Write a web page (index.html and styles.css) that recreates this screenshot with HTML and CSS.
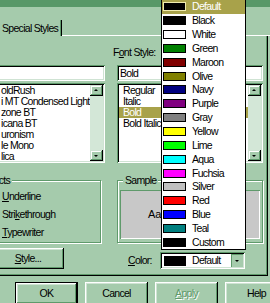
FILE: index.html
```html
<!DOCTYPE html>
<html lang="en">
<head>
    <meta charset="UTF-8">
    <title>Font</title>
    <link rel="stylesheet" href="styles.css">
</head>
<body>
    <div class="top-band"></div>

    <div class="tabs">
        <div class="tab">Special Styles</div>
        <div class="tab-rest"></div>
    </div>

    <div class="panel">
        <div class="fields">
            <div class="col col-left">
                <div class="label">&nbsp;</div>
                <div class="textbox"></div>
                <div class="listbox">
                    <ul class="items">
                        <li>oldRush</li>
                        <li>i MT Condensed Light</li>
                        <li>zone BT</li>
                        <li>icana BT</li>
                        <li>uronism</li>
                        <li>le Mono</li>
                        <li>lica</li>
                    </ul>
                    <div class="scrollbar">
                        <div class="arrow up"></div>
                        <div class="track"></div>
                        <div class="arrow down"></div>
                    </div>
                </div>
            </div>
            <div class="col col-right">
                <div class="label label-style">F<u>o</u>nt Style:</div>
                <div class="textbox">Bold</div>
                <div class="listbox">
                    <ul class="items">
                        <li>Regular</li>
                        <li>Italic</li>
                        <li class="selected">Bold</li>
                        <li>Bold Italic</li>
                    </ul>
                    <div class="scrollbar">
                        <div class="arrow up"></div>
                        <div class="track"></div>
                        <div class="arrow down"></div>
                    </div>
                </div>
            </div>
        </div>

        <div class="groups">
            <div class="group group-effects">
                <div class="group-title">Effects</div>
                <div class="check"><u>U</u>nderline</div>
                <div class="check">Stri<u>k</u>ethrough</div>
                <div class="check"><u>T</u>ypewriter</div>
            </div>
            <div class="group group-sample">
                <div class="group-title">Sample</div>
                <div class="sample">AaBbYyZz</div>
            </div>
        </div>

        <div class="lower">
            <div class="lower-left">
                <button class="btn btn-style"><u>S</u>tyle...</button>
            </div>
            <div class="lower-right">
                <span class="color-label"><u>C</u>olor:</span>
                <div class="combo">
                    <span class="swatch" style="background:#000"></span>
                    <span class="combo-text">Default</span>
                    <span class="combo-btn"></span>
                </div>
            </div>
        </div>
    </div>

    <div class="buttons">
        <button class="btn btn-default">OK</button>
        <button class="btn">Cancel</button>
        <button class="btn btn-disabled"><u>A</u>pply</button>
        <button class="btn">Help</button>
    </div>

    <ul class="popup">
        <li class="selected"><span class="swatch" style="background:#000"></span>Default</li>
        <li><span class="swatch" style="background:#000"></span>Black</li>
        <li><span class="swatch" style="background:#fff"></span>White</li>
        <li><span class="swatch" style="background:#008000"></span>Green</li>
        <li><span class="swatch" style="background:#800000"></span>Maroon</li>
        <li><span class="swatch" style="background:#808000"></span>Olive</li>
        <li><span class="swatch" style="background:#000080"></span>Navy</li>
        <li><span class="swatch" style="background:#800080"></span>Purple</li>
        <li><span class="swatch" style="background:#808080"></span>Gray</li>
        <li><span class="swatch" style="background:#ffff00"></span>Yellow</li>
        <li><span class="swatch" style="background:#00ff00"></span>Lime</li>
        <li><span class="swatch" style="background:#00ffff"></span>Aqua</li>
        <li><span class="swatch" style="background:#ff00ff"></span>Fuchsia</li>
        <li><span class="swatch" style="background:#c0c0c0"></span>Silver</li>
        <li><span class="swatch" style="background:#ff0000"></span>Red</li>
        <li><span class="swatch" style="background:#0000ff"></span>Blue</li>
        <li><span class="swatch" style="background:#008080"></span>Teal</li>
        <li><span class="swatch" style="background:#000"></span>Custom</li>
    </ul>
</body>
</html>
```

FILE: styles.css
```css
body, html {
    margin: 0;
    padding: 0;
}

body {
    position: relative;
    width: 270px;
    height: 303px;
    overflow: hidden;
    background-color: #a5cbac;
    font-family: 'Liberation Sans', Arial, sans-serif;
    font-size: 10.5px;
    letter-spacing: -0.7px;
    line-height: 13px;
    color: #000;
}

ul {
    margin: 0;
    padding: 0;
    list-style: none;
}

.top-band {
    height: 7px;
    background-color: #589868;
}

/* tabs */
.tabs {
    display: flex;
    margin-top: 13px;
    height: 16px;
}

.tab {
    width: 62px;
    padding-top: 2px;
    padding-left: 2px;
    box-sizing: border-box;
    border-right: 1px solid #000;
    box-shadow: inset -1px 0 0 #5f9a6b;
    white-space: nowrap;
    overflow: hidden;
}

.tab-rest {
    flex: 1;
    border-bottom: 1px solid #fff;
}

/* panel */
.panel {
    height: 240px;
    box-sizing: border-box;
    padding-top: 10px;
    margin-right: 2px;
    border-right: 1px solid #000;
    border-bottom: 1px solid #000;
    box-shadow: inset -1px -1px 0 #5f9a6b;
}

.fields {
    display: flex;
    gap: 12px;
    margin-left: -6px;
}

.col-left {
    width: 111px;
}

.col-right {
    width: 146px;
}

.label {
    height: 13px;
    white-space: nowrap;
}

.label-style {
    margin-left: -4px;
}

.textbox {
    margin-top: 6px;
    height: 16px;
    box-sizing: border-box;
    padding: 2px 3px;
    line-height: 12px;
    background: #fff;
    box-shadow: inset 1px 1px 0 #5f9a6b, inset -1px -1px 0 #fff, inset 2px 2px 0 #000, inset -2px -2px 0 #cfe3d3;
}

.listbox {
    margin-top: 2px;
    height: 80px;
    box-sizing: border-box;
    padding: 2px;
    display: flex;
    background: #fff;
    box-shadow: inset 1px 1px 0 #5f9a6b, inset -1px -1px 0 #fff, inset 2px 2px 0 #000, inset -2px -2px 0 #cfe3d3;
}

.items {
    flex: 1;
    overflow: hidden;
}

.items li {
    height: 11px;
    line-height: 11px;
    padding-left: 4px;
    white-space: nowrap;
}

.col-left .items li {
    padding-left: 5px;
}

.items li.selected {
    background: #a8a24a;
    color: #fff;
}

.scrollbar {
    width: 13px;
    display: flex;
    flex-direction: column;
}

.track {
    flex: 1;
    background: #d3e7d7;
}

.arrow {
    height: 11px;
    position: relative;
    background: #a5cbac;
    box-shadow: inset -1px -1px 0 #000, inset 1px 1px 0 #cfe3d3, inset -2px -2px 0 #5f9a6b, inset 2px 2px 0 #fff;
}

.arrow::after {
    content: "";
    position: absolute;
    left: 4px;
    width: 0;
    height: 0;
    border-left: 2px solid transparent;
    border-right: 2px solid transparent;
}

.arrow.up::after {
    top: 4px;
    border-bottom: 2px solid #000;
}

.arrow.down::after {
    top: 5px;
    border-top: 2px solid #000;
}

/* group boxes */
.groups {
    display: flex;
    gap: 16px;
    margin-top: 17px;
    margin-left: -8px;
}

.group {
    height: 63px;
    box-sizing: border-box;
    border: 1px solid #5f9a6b;
    box-shadow: 1px 1px 0 #fff, inset 1px 1px 0 #fff;
}

.group-title {
    width: fit-content;
    margin-top: -7px;
    margin-left: 5px;
    padding: 0 2px;
    background: #a5cbac;
    white-space: nowrap;
}

.group-effects {
    width: 109px;
}

.group-effects .group-title {
    margin-left: -12px;
}

.group-sample {
    width: 146px;
}

.check {
    height: 18px;
    padding-left: 9px;
    white-space: nowrap;
}

.group-title + .check {
    margin-top: 3px;
}

.sample {
    margin: 3px 2px 0 2px;
    height: 49px;
    box-sizing: border-box;
    padding-top: 18px;
    padding-left: 28px;
    background: #c8c8c8;
    box-shadow: inset 1px 1px 0 #5f9a6b, inset -1px -1px 0 #fff;
    font-size: 11px;
    letter-spacing: 0;
    white-space: nowrap;
    overflow: hidden;
}

/* style button and color combo */
.lower {
    display: flex;
    margin-top: 5px;
    margin-left: -8px;
}

.lower-left {
    width: 72px;
}

.lower-right {
    display: flex;
    align-items: center;
    margin-left: 64px;
    margin-top: 4px;
}

.btn {
    font-family: 'Liberation Sans', Arial, sans-serif;
    font-size: 10.5px;
    letter-spacing: -0.7px;
    line-height: 13px;
    color: #000;
    background: #a5cbac;
    border: none;
    padding: 0;
    box-shadow: inset -1px -1px 0 #000, inset 1px 1px 0 #fff, inset -2px -2px 0 #5f9a6b, inset 2px 2px 0 #cfe3d3;
}

.btn-style {
    width: 72px;
    height: 21px;
}

.color-label {
    width: 32px;
}

.combo {
    display: flex;
    align-items: center;
    width: 85px;
    height: 17px;
    box-sizing: border-box;
    padding: 2px;
    background: #fff;
    box-shadow: inset 1px 1px 0 #5f9a6b, inset -1px -1px 0 #fff, inset 2px 2px 0 #000, inset -2px -2px 0 #cfe3d3;
}

.combo .swatch {
    margin-left: 2px;
    width: 22px;
    height: 10px;
}

.combo-text {
    flex: 1;
    margin-left: 6px;
}

.combo-btn {
    position: relative;
    width: 12px;
    height: 13px;
    background: #a5cbac;
    box-shadow: inset 1px 1px 0 #5f9a6b;
}

.combo-btn::after {
    content: "";
    position: absolute;
    left: 4px;
    top: 6px;
    border-left: 2px solid transparent;
    border-right: 2px solid transparent;
    border-top: 2px solid #000;
}

/* bottom buttons */
.buttons {
    display: flex;
    gap: 7px;
    margin-top: 6px;
    margin-left: 15px;
}

.buttons .btn {
    flex: none;
    width: 63px;
    height: 23px;
}

.btn-default {
    box-shadow: inset 0 0 0 1px #000, inset -2px -2px 0 #000, inset 2px 2px 0 #fff, inset -3px -3px 0 #5f9a6b, inset 3px 3px 0 #cfe3d3;
}

.btn-disabled {
    color: #5f9a6b;
    text-shadow: 1px 1px 0 #fff;
}

/* colour dropdown, drawn over the dialog */
.popup {
    position: absolute;
    left: 161px;
    top: -1px;
    width: 85px;
    box-sizing: border-box;
    border: 1px solid #000;
    background: #fff;
}

.popup li {
    display: flex;
    align-items: center;
    height: 13.85px;
    padding-left: 1px;
    white-space: nowrap;
}

.popup .swatch {
    flex: none;
    width: 23px;
    height: 9px;
    margin-right: 6px;
    box-sizing: border-box;
    border: 1px solid #000;
}

.popup li.selected {
    background: #a8a24a;
    color: #fff;
}

.popup li.selected .swatch {
    border-color: #f0ecb0;
}
```
